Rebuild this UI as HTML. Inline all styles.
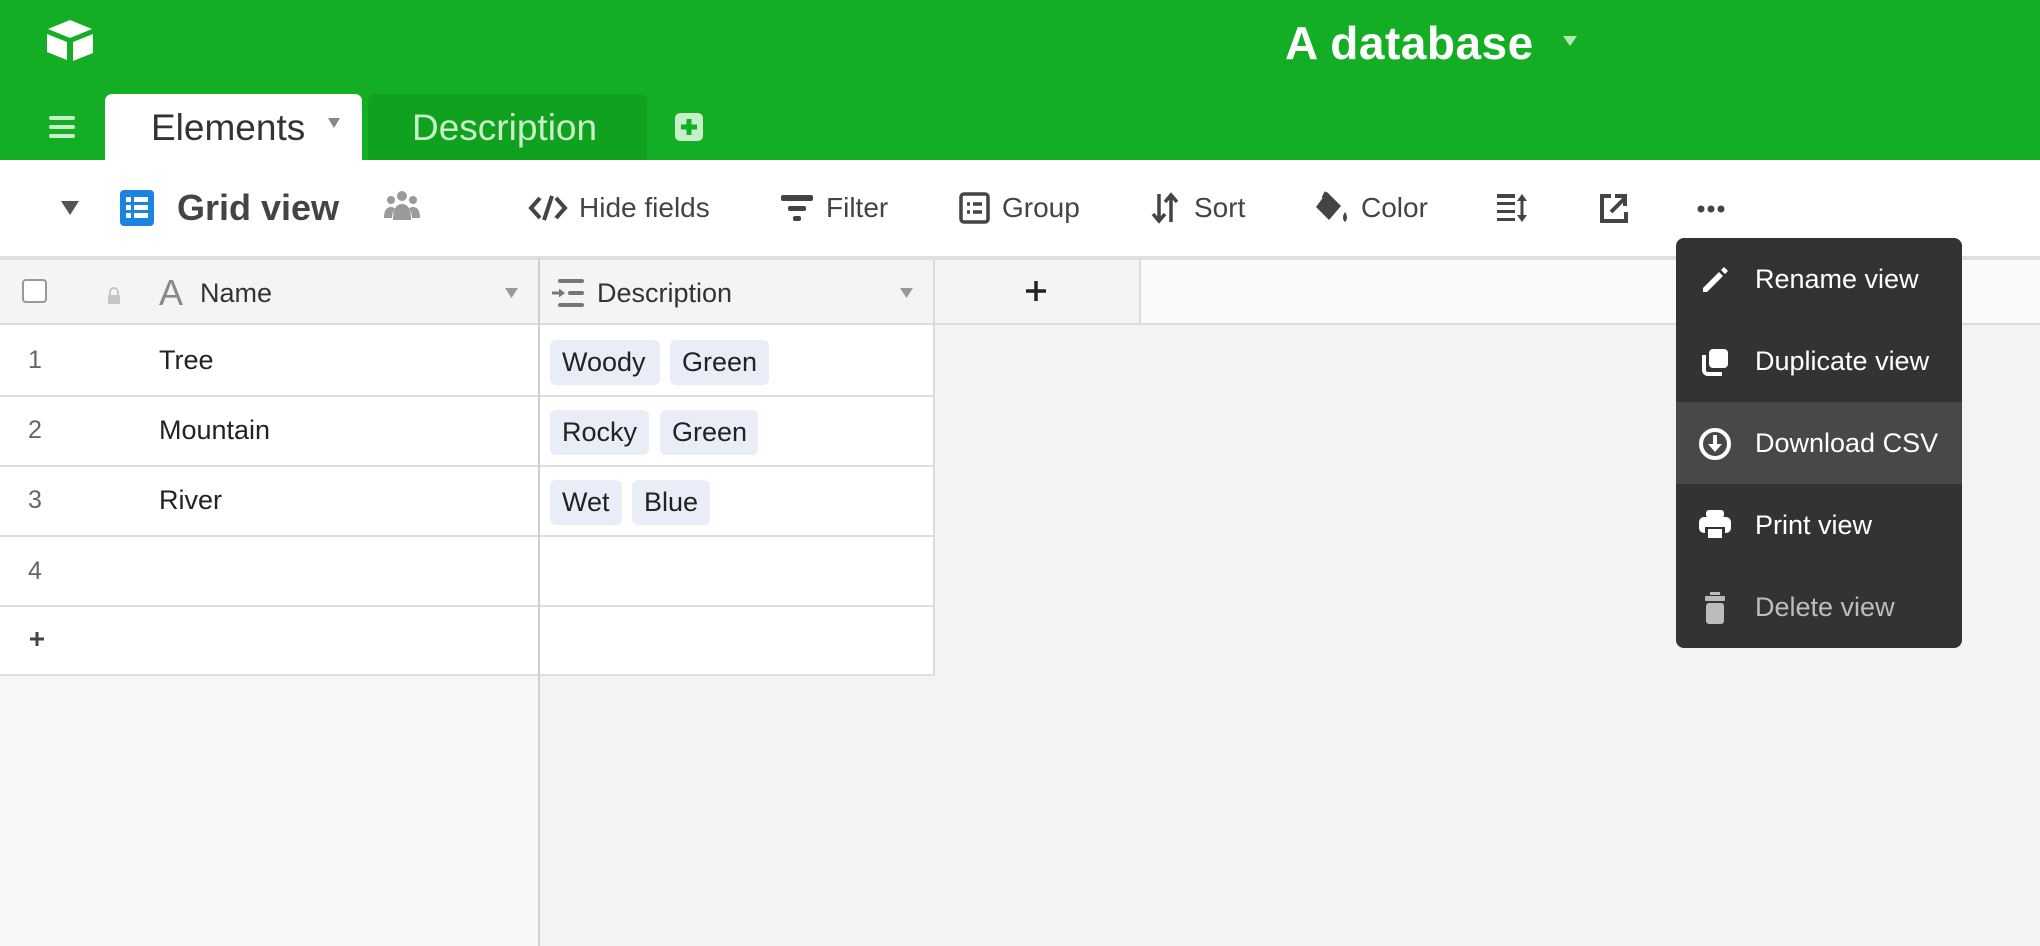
<!DOCTYPE html>
<html><head><meta charset="utf-8">
<style>
*{box-sizing:border-box;margin:0;padding:0}
body{width:2040px;height:946px;overflow:hidden;background:#f3f3f3;font-family:"Liberation Sans",sans-serif;position:relative}
.abs{position:absolute}
#hdr{left:0;top:0;width:2040px;height:160px;background:#13ae23}
.t{position:absolute;white-space:nowrap}
#tb{left:0;top:160px;width:2040px;height:96px;background:#fff}
.tbt{font-size:28px;color:#444;top:190px;line-height:36px}
.hline{position:absolute;height:2px;background:#dcdfe3}
.tag{position:absolute;height:45px;background:#e9edf7;border-radius:6px;font-size:27px;color:#222;line-height:45px;padding-left:12px}
.num{position:absolute;left:28px;font-size:25px;color:#666}
.nm{position:absolute;left:159px;font-size:27px;color:#222}
.mi{position:absolute;left:1755px;font-size:27px;color:#fff}
</style></head><body>
<div id="hdr" class="abs"></div>
<svg class="abs" style="left:44px;top:18px" width="52" height="44" viewBox="0 0 52 44">
<path d="M4 11 L26 2 L48 11 L26 20 Z" fill="#fff"/>
<path d="M3 16 L23 24 L23 42 L3 34 Z" fill="#fff"/>
<path d="M29 24 L49 16 L49 35 L29 43 Z" fill="#fff"/>
</svg>
<div class="t" style="left:1285px;top:14px;font-size:46px;font-weight:bold;color:#fff;line-height:58px;letter-spacing:0.5px">A database</div>
<svg class="abs" style="left:1563px;top:36px" width="14" height="10"><path d="M0 0H14L7 10Z" fill="#b8e8b8"/></svg>
<div class="abs" style="left:49px;top:116px;width:26px;height:4px;background:#c9efc9;border-radius:2px"></div>
<div class="abs" style="left:49px;top:125px;width:26px;height:4px;background:#c9efc9;border-radius:2px"></div>
<div class="abs" style="left:49px;top:134px;width:26px;height:4px;background:#c9efc9;border-radius:2px"></div>
<div class="abs" style="left:105px;top:94px;width:257px;height:68px;background:#fff;border-radius:7px 7px 0 0"></div>
<div class="t" style="left:151px;top:106px;font-size:37px;color:#333;line-height:44px">Elements</div>
<svg class="abs" style="left:328px;top:118px" width="12" height="10"><path d="M0 0H12L6 10Z" fill="#888"/></svg>
<div class="abs" style="left:368px;top:94px;width:279px;height:66px;background:#10a11f;border-radius:7px 7px 0 0"></div>
<div class="t" style="left:412px;top:106px;font-size:37px;color:#c8f0c8;line-height:44px">Description</div>
<svg class="abs" style="left:675px;top:113px" width="28" height="28" viewBox="0 0 28 28"><rect width="28" height="28" rx="5" fill="#c8f0c8"/><path d="M14 6V22M6 14H22" stroke="#13ae23" stroke-width="5"/></svg>
<div id="tb" class="abs"></div>
<div class="abs" style="left:0;top:256px;width:2040px;height:4px;background:#e0e0e0"></div>
<svg class="abs" style="left:61px;top:201px" width="18" height="14"><path d="M0 0H18L9 14Z" fill="#555"/></svg>
<svg class="abs" style="left:120px;top:190px" width="34" height="36" viewBox="0 0 34 36"><rect width="34" height="36" rx="4" fill="#1a84e0"/><g fill="#fff"><rect x="6" y="7" width="5" height="5"/><rect x="14" y="7" width="14" height="5"/><rect x="6" y="15" width="5" height="5"/><rect x="14" y="15" width="14" height="5"/><rect x="6" y="23" width="5" height="5"/><rect x="14" y="23" width="14" height="5"/></g></svg>
<div class="t" style="left:177px;top:186px;font-size:36px;font-weight:bold;color:#444;line-height:44px">Grid view</div>
<svg class="abs" style="left:384px;top:190px" width="36" height="32" viewBox="0 0 36 32" fill="#9a9a9a"><circle cx="18" cy="6" r="5"/><circle cx="7" cy="10" r="4"/><circle cx="29" cy="10" r="4"/><path d="M9 30 Q9 14 18 14 Q27 14 27 30Z"/><path d="M0 28 Q0 17 7 17 Q10 17 11 19 Q8 23 8 28Z"/><path d="M36 28 Q36 17 29 17 Q26 17 25 19 Q28 23 28 28Z"/></svg>
<svg class="abs" style="left:528px;top:193px" width="40" height="30" viewBox="0 0 40 30" fill="none" stroke="#444" stroke-width="4"><path d="M12 5 L3 15 L12 25"/><path d="M28 5 L37 15 L28 25"/><path d="M24 3 L16 27"/></svg>
<div class="t tbt" style="left:579px">Hide fields</div>
<svg class="abs" style="left:781px;top:195px" width="32" height="28" viewBox="0 0 32 28" fill="#444"><rect x="0" y="0" width="32" height="6" rx="2"/><rect x="7" y="11" width="18" height="5" rx="2"/><rect x="12" y="21" width="8" height="5" rx="2"/></svg>
<div class="t tbt" style="left:826px">Filter</div>
<svg class="abs" style="left:959px;top:192px" width="31" height="32" viewBox="0 0 31 32" fill="none" stroke="#444" stroke-width="3.5"><rect x="2" y="2" width="27" height="28" rx="3"/><path d="M8 12h3M14 12h9M8 20h3M14 20h9"/></svg>
<div class="t tbt" style="left:1002px">Group</div>
<svg class="abs" style="left:1151px;top:192px" width="28" height="32" viewBox="0 0 28 32" fill="none" stroke="#444" stroke-width="3.5"><path d="M8 2V28M2 22L8 29L14 22"/><path d="M20 30V4M14 10L20 3L26 10"/></svg>
<div class="t tbt" style="left:1194px">Sort</div>
<svg class="abs" style="left:1314px;top:190px" width="36" height="36" viewBox="0 0 36 36" fill="#444"><path d="M13 2 L27 16 L15 30 L2 17 Z"/><path d="M12 2 L9 8" stroke="#444" stroke-width="3"/><path d="M31 22 Q35 28 31 32 Q27 28 31 22Z"/></svg>
<div class="t tbt" style="left:1361px">Color</div>
<svg class="abs" style="left:1497px;top:192px" width="32" height="32" viewBox="0 0 32 32" fill="#444"><rect x="0" y="2" width="18" height="4"/><rect x="0" y="10" width="18" height="3"/><rect x="0" y="18" width="18" height="3"/><rect x="0" y="26" width="18" height="3"/><path d="M25 2 L20 9 H30 Z M25 30 L20 23 H30 Z"/><rect x="23.5" y="6" width="3" height="20"/></svg>
<svg class="abs" style="left:1599px;top:192px" width="30" height="32" viewBox="0 0 30 32" fill="none" stroke="#444" stroke-width="4"><path d="M12 4H3V29H27V20"/><path d="M12 20L26 6M16 4H26V14"/></svg>
<svg class="abs" style="left:1697px;top:204px" width="28" height="10" fill="#444"><circle cx="4" cy="5" r="3.5"/><circle cx="14" cy="5" r="3.5"/><circle cx="24" cy="5" r="3.5"/></svg>
<div class="abs" style="left:0;top:260px;width:934px;height:65px;background:#f4f4f4"></div>
<div class="abs" style="left:934px;top:260px;width:206px;height:65px;background:#f4f4f4"></div>
<div class="abs" style="left:1140px;top:260px;width:900px;height:65px;background:#fafafa"></div>
<div class="hline" style="left:0;top:323px;width:2040px;background:#dcdcdc"></div>
<div class="abs" style="left:22px;top:279px;width:25px;height:24px;border:2px solid #999;border-radius:4px;background:#fff"></div>
<svg class="abs" style="left:107px;top:287px" width="14" height="17" viewBox="0 0 14 17" fill="#c6c6c6"><path d="M3 8V5a4 4 0 0 1 8 0V8" stroke="#c6c6c6" stroke-width="2" fill="none"/><rect x="1" y="8" width="12" height="9" rx="1"/></svg>
<div class="t" style="left:159px;top:273px;font-size:36px;color:#888;line-height:40px">A</div>
<div class="t" style="left:200px;top:276px;font-size:27px;color:#333;line-height:34px">Name</div>
<svg class="abs" style="left:505px;top:288px" width="13" height="10"><path d="M0 0H13L6.5 10Z" fill="#999"/></svg>
<svg class="abs" style="left:552px;top:279px" width="32" height="28" viewBox="0 0 32 28" fill="#777"><rect x="6" y="0" width="26" height="4" rx="2"/><rect x="16" y="12" width="16" height="4" rx="2"/><rect x="6" y="24" width="26" height="4" rx="2"/><path d="M0 12.5h7v-3l6 4.5-6 4.5v-3H0z"/></svg>
<div class="t" style="left:597px;top:276px;font-size:27px;color:#333;line-height:34px">Description</div>
<svg class="abs" style="left:900px;top:288px" width="13" height="10"><path d="M0 0H13L6.5 10Z" fill="#999"/></svg>
<svg class="abs" style="left:1025px;top:280px" width="22" height="22"><path d="M11 1V21M1 11H21" stroke="#222" stroke-width="3.5"/></svg>
<div class="abs" style="left:0;top:325px;width:539px;height:621px;background:#f7f7f7"></div>
<div class="abs" style="left:0;top:325px;width:934px;height:350px;background:#fff"></div>
<div class="hline" style="left:0;top:395px;width:934px"></div>
<div class="hline" style="left:0;top:465px;width:934px"></div>
<div class="hline" style="left:0;top:535px;width:934px"></div>
<div class="hline" style="left:0;top:605px;width:934px"></div>
<div class="hline" style="left:0;top:674px;width:934px"></div>
<div class="abs" style="left:538px;top:258px;width:2px;height:688px;background:#d0d0d0"></div>
<div class="abs" style="left:933px;top:258px;width:2px;height:418px;background:#dcdcdc"></div>
<div class="abs" style="left:1139px;top:258px;width:2px;height:66px;background:#dcdcdc"></div>
<div class="num" style="top:346px">1</div><div class="nm" style="top:345px">Tree</div>
<div class="num" style="top:416px">2</div><div class="nm" style="top:415px">Mountain</div>
<div class="num" style="top:486px">3</div><div class="nm" style="top:485px">River</div>
<div class="num" style="top:557px">4</div>
<svg class="abs" style="left:29px;top:631px" width="16" height="16"><path d="M8 1V15M1 8H15" stroke="#444" stroke-width="3"/></svg>
<div class="tag" style="left:550px;top:340px;width:110px">Woody</div>
<div class="tag" style="left:670px;top:340px;width:99px">Green</div>
<div class="tag" style="left:550px;top:410px;width:99px">Rocky</div>
<div class="tag" style="left:660px;top:410px;width:98px">Green</div>
<div class="tag" style="left:550px;top:480px;width:72px">Wet</div>
<div class="tag" style="left:632px;top:480px;width:78px">Blue</div>
<div class="abs" style="left:1676px;top:238px;width:286px;height:410px;background:#333;border-radius:8px;overflow:hidden">
<div class="abs" style="left:0;top:164px;width:286px;height:82px;background:#484848"></div>
</div>
<svg class="abs" style="left:1701px;top:266px" width="28" height="28" viewBox="0 0 28 28" fill="#fff"><path d="M2 22 L18 6 L22 10 L6 26 H2 Z"/><path d="M20 4 L23 1 L27 5 L24 8 Z"/></svg>
<div class="mi" style="top:264px">Rename view</div>
<svg class="abs" style="left:1701px;top:348px" width="28" height="28" viewBox="0 0 28 28"><rect x="8" y="1" width="19" height="19" rx="4" fill="#fff"/><path d="M3 7V22a4 4 0 0 0 4 4H21" stroke="#fff" stroke-width="4" fill="none"/></svg>
<div class="mi" style="top:346px">Duplicate view</div>
<svg class="abs" style="left:1698px;top:427px" width="34" height="34" viewBox="0 0 34 34"><circle cx="17" cy="17" r="14" stroke="#fff" stroke-width="4" fill="none"/><path d="M17 8V20" stroke="#fff" stroke-width="4"/><path d="M10 17L17 25L24 17Z" fill="#fff"/></svg>
<div class="mi" style="top:428px">Download CSV</div>
<svg class="abs" style="left:1699px;top:510px" width="32" height="30" viewBox="0 0 32 30" fill="#fff"><rect x="7" y="0" width="18" height="8" rx="3"/><rect x="0" y="7" width="32" height="16" rx="5"/><rect x="6" y="17" width="20" height="13" fill="#333"/><rect x="9" y="19" width="14" height="9" fill="#fff"/></svg>
<div class="mi" style="top:510px">Print view</div>
<svg class="abs" style="left:1704px;top:592px" width="22" height="32" viewBox="0 0 22 32" fill="#bbb"><rect x="6" y="0" width="10" height="3"/><rect x="1" y="4" width="20" height="5" rx="1"/><rect x="2" y="11" width="18" height="21" rx="3"/></svg>
<div class="mi" style="top:592px;color:#bdbdbd">Delete view</div>
</body></html>
